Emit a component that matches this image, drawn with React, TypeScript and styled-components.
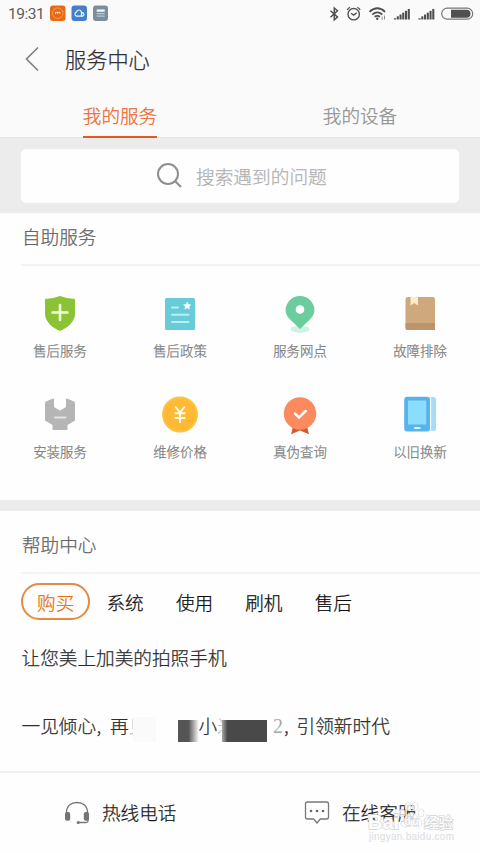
import React from "react";
import styled, { createGlobalStyle } from "styled-components";

const Global = createGlobalStyle`
  * { box-sizing: border-box; }
  body {
    margin: 0;
    background: #fefefe;
    font-family: "Noto Sans CJK SC", "Noto Sans", sans-serif;
    font-weight: 300;
    -webkit-text-stroke-width: 0.25px;
  }
`;

const Screen = styled.main`
  position: relative;
  width: 480px;
  height: 853px;
  overflow: hidden;
  display: flex;
  flex-direction: column;
  background: #fefefe;
`;

const StatusBar = styled.div`
  height: 27px;
  flex: none;
  display: flex;
  align-items: center;
  justify-content: space-between;
  padding: 0 6px 0 8px;
  background: #fafafa;
`;

const StatusLeft = styled.div`
  display: flex;
  align-items: center;
`;

const Clock = styled.span`
  width: 42px;
  padding-top: 1px;
  font-family: Roboto, sans-serif;
  font-weight: 400;
  -webkit-text-stroke-width: 0;
  font-size: 15.5px;
  line-height: 27px;
  letter-spacing: -0.5px;
  color: #5c5c5c;
`;

const StatusIcon = styled.svg`
  display: block;
  flex: none;
`;

const Header = styled.header`
  height: 65px;
  flex: none;
  display: flex;
  align-items: center;
  padding: 0 0 2px 25px;
  background: #fafafa;
`;

const PageTitle = styled.h1`
  margin: 0 0 0 25px;
  font-size: 21.2px;
  line-height: 30px;
  font-weight: 300;
  color: #303030;
`;

const Tabs = styled.nav`
  height: 46px;
  flex: none;
  display: grid;
  grid-template-columns: 1fr 1fr;
  justify-items: center;
  background: #fafafa;
  border-bottom: 1px solid #e6e6e6;
`;

const Tab = styled.div<{ $active?: boolean }>`
  height: 47px;
  padding-top: 8px;
  font-size: 18.6px;
  line-height: 29px;
  color: ${(p) => (p.$active ? "#eb6830" : "#909090")};
  border-bottom: 3px solid ${(p) => (p.$active ? "#e05a22" : "transparent")};
  border-radius: 0 0 1px 1px;
`;

const SearchArea = styled.div`
  height: 75px;
  flex: none;
  padding: 11px 21px 10px;
  background: #ececec;
`;

const SearchBox = styled.div`
  height: 54px;
  border-radius: 5px;
  background: #fefefe;
  display: flex;
  align-items: center;
  padding: 0 0 1px 135px;
  gap: 13px;
  font-size: 18.7px;
  color: #b0b0b0;
`;

const SearchHint = styled.span`
  margin-top: -1px;
`;

const SectionTitle = styled.h2<{ $height: number; $line: number }>`
  margin: 0 0 0 21px;
  height: ${(p) => p.$height}px;
  flex: none;
  line-height: ${(p) => p.$line}px;
  padding-left: 1px;
  font-size: 18.6px;
  font-weight: 300;
  color: #626262;
  border-bottom: 2px solid #f3f3f3;
`;

const ServiceGrid = styled.div`
  height: 234px;
  flex: none;
  display: grid;
  grid-template-columns: repeat(4, 1fr);
  grid-template-rows: 101px 101px;
  padding-top: 25px;
`;

const Service = styled.div`
  display: flex;
  flex-direction: column;
  align-items: center;
`;

const ServiceLabel = styled.span`
  margin-top: 5px;
  font-size: 13.4px;
  line-height: 20px;
  color: #7c7c7c;
`;

const Gap = styled.div`
  height: 11px;
  flex: none;
  background: #ececec;
`;

const Chips = styled.div`
  flex: none;
  display: flex;
  padding: 9px 0 0 21px;
`;

const Chip = styled.div<{ $active?: boolean }>`
  width: 69.4px;
  height: 37px;
  padding-bottom: 1px;
  display: flex;
  align-items: center;
  justify-content: center;
  font-size: 18.6px;
  color: ${(p) => (p.$active ? "#e36f0c" : "#0c0c0c")};
  border: 2px solid ${(p) => (p.$active ? "#e58a42" : "transparent")};
  border-radius: 19px;
`;

const Article = styled.div<{ $height: number }>`
  height: ${(p) => p.$height}px;
  flex: none;
  display: flex;
  align-items: center;
  padding: 0 0 3px 21.5px;
  font-size: 18.65px;
  color: #2c2c2c;
  white-space: pre;

  & + & {
    margin-bottom: 15px;
  }
`;

const Piece = styled.span<{ $w: number }>`
  width: ${(p) => p.$w}px;
  flex: none;
`;

const FadedPiece = styled.span`
  width: 18.6px;
  flex: none;
  color: transparent;
  background: linear-gradient(90deg, #aaa, #ccc 5px, transparent 6px);
  background-clip: text;
  -webkit-background-clip: text;
`;

const Two = styled.span`
  width: 11px;
  flex: none;
  margin-top: 3px;
  font-family: "Liberation Serif", serif;
  -webkit-text-stroke-width: 0;
  font-size: 20px;
  color: #a8a8a8;
`;

const Mask = styled.span<{ $w: number; $h: number; $fill: string; $ml: number }>`
  width: ${(p) => p.$w}px;
  height: ${(p) => p.$h}px;
  margin-left: ${(p) => p.$ml}px;
  margin-bottom: 11px;
  align-self: flex-end;
  flex: none;
  background: ${(p) => p.$fill};
`;

const Footer = styled.footer`
  height: 81px;
  flex: none;
  display: grid;
  grid-template-columns: 1fr 1fr;
  border-top: 2px solid #f0f0f0;
`;

const FooterItem = styled.div`
  display: flex;
  align-items: center;
  gap: 12px;
  padding-left: 64px;
  font-size: 18.6px;
  color: #1c1c1c;
`;

const FooterLabel = styled.span`
  margin-top: -2px;
`;

const Watermark = styled.div`
  position: absolute;
  left: 367px;
  top: 801px;
  width: 90px;
  height: 44px;
  -webkit-text-stroke-width: initial;
`;

const ShieldIcon = () => (
  <svg width="40" height="44" viewBox="0 0 40 44">
    <path d="M20 5 Q28 8 35 8V23C35 31 27 37 20 40C13 37 5 31 5 23V8Q12 8 20 5Z" fill="#8bc334" />
    <path d="M20 14v15M12.500 21.500h15" stroke="#f0ffd9" strokeWidth="2.600" strokeLinecap="round" />
  </svg>
);

const PolicyIcon = () => (
  <svg width="40" height="44" viewBox="0 0 40 44">
    <rect x="5" y="7" width="30" height="32" rx="1.500" fill="#68ccd8" />
    <path d="M12 16.500h6M12 23.700h16.500M12 31h16.500" stroke="#b6f0f3" strokeWidth="2" strokeLinecap="round" />
    <path d="M27.200 11l1.100 2.400 2.600.3-1.900 1.800.5 2.600-2.300-1.300-2.300 1.300.5-2.600-1.900-1.800 2.600-.3z" fill="#fff" stroke="#fff" strokeWidth=".5" />
  </svg>
);

const PinIcon = () => (
  <svg width="40" height="44" viewBox="0 0 40 44">
    <ellipse cx="20" cy="38.200" rx="9.500" ry="3.700" fill="#d5f1e3" />
    <path d="M20 38L9.200 27.500C6.800 24.700 5.600 22.500 5.600 19.500a14.400 14.400 0 0 1 28.800 0C34.400 22.500 33.200 24.700 30.800 27.500Z" fill="#6bcd9d" />
    <circle cx="20" cy="18.500" r="4.300" fill="#fff" />
  </svg>
);

const BookIcon = () => (
  <svg width="40" height="44" viewBox="0 0 40 44">
    <path d="M8 6h25a2 2 0 0 1 2 2v31H7.500a2 2 0 0 1-2-2V8.500a2.500 2.500 0 0 1 2.500-2.500Z" fill="#cfa97d" />
    <path d="M5.500 32H35v7H7.500a2 2 0 0 1-2-2Z" fill="#bd956c" />
    <path d="M10.500 6h7.500v8.500l-3.700-2.600-3.800 2.600Z" fill="#fbecd0" />
  </svg>
);

const WrenchIcon = () => (
  <svg width="40" height="44" viewBox="0 0 40 44">
    <path d="M6 9.500L13 6.500Q14 6.200 14 7.500V15L20 18.500L26 15V7.500Q26 6.200 27 6.500L34 9.500Q35 10 35 11V28.500L27.500 33V38H12.500V33L5 28.500V11Q5 10 6 9.500Z" fill="#b5b5b5" />
    <path d="M15 25.500h10.500" stroke="#e4e4e4" strokeWidth="2" strokeLinecap="round" />
  </svg>
);

const CoinIcon = () => (
  <svg width="40" height="44" viewBox="0 0 40 44">
    <circle cx="20" cy="22.500" r="17" fill="#ffb935" stroke="#fbc53c" strokeWidth="1.800" />
    <path d="M15.200 14.500L20 20.500L24.800 14.500M20 20.500V31M14.500 21.200h11M14.500 26h11" fill="none" stroke="#fffbe9" strokeWidth="2" />
  </svg>
);

const MedalIcon = () => (
  <svg width="40" height="44" viewBox="0 0 40 44">
    <path d="M13 34h14l2 8.300L20 38.500L11.200 42.300Z" fill="#cc5e33" />
    <circle cx="20" cy="21.500" r="16.200" fill="#fb8a5f" />
    <path d="M15 21.700L19 25.500L25.700 19" fill="none" stroke="#fff" strokeWidth="2.500" strokeLinecap="round" />
  </svg>
);

const PhoneIcon = () => (
  <svg width="40" height="44" viewBox="0 0 40 44">
    <path d="M29 5h4.500q2.500 0 2.500 2.500V36.500q0 2.500-2.500 2.500H29Z" fill="#a7dcf6" />
    <rect x="3.600" y="4" width="27.500" height="36" rx="3.800" fill="#fff" />
    <rect x="4.200" y="4.800" width="25.800" height="34.700" rx="3" fill="#56b4ec" />
    <path d="M8 8.500h18.200v24H8z" fill="#8addff" />
    <path d="M15 36h4.500" stroke="#e4f8ff" strokeWidth="2.200" strokeLinecap="round" />
  </svg>
);

const AppBadges = () => (
  <StatusIcon width="60" height="18" viewBox="0 1 60 18">
    <rect x="0" y="1.500" width="15.500" height="15.500" rx="3" fill="#e96816" />
    <circle cx="7.700" cy="9.200" r="5.300" fill="none" stroke="#ff9b54" />
    <path d="M5.500 10V8.300h4.400V10M7.700 8.500V10" fill="none" stroke="#ffe4cd" strokeWidth=".9" />
    <rect x="21.500" y="1.500" width="15.500" height="15.500" rx="3" fill="#447fce" />
    <path d="M26.500 12.200a2.300 2.300 0 0 1 0-4.300c.4-2.400 4.100-2.700 4.900 0l.3 4.300ZM31.500 12.200V8.700h1a1.800 1.800 0 0 1 0 3.500Z" fill="none" stroke="#eef6ff" strokeWidth="1.200" />
    <rect x="43" y="1.500" width="15" height="15.500" rx="3" fill="#7b8e9b" />
    <path d="M46.700 6.600h8" stroke="#f4f7f9" strokeWidth="2.300" />
    <path d="M46.700 9.700h8M46.700 12.200h8" stroke="#bdc8cf" strokeWidth="1.300" />
  </StatusIcon>
);

const bars = [0, 1, 2, 3, 4, 5];

const SystemIcons = () => (
  <StatusIcon width="146" height="20" viewBox="328 3.5 146 20">
    <path d="M330.500 10.200L337.500 16.500L334.300 19.300V7.500L337.500 10.200L330.500 16.700" fill="none" stroke="#505050" strokeWidth="1.500" />
    <g fill="none" stroke="#555" strokeWidth="1.400">
      <circle cx="353.700" cy="13.700" r="5.700" />
      <path d="M351 12.700l2.700 1.900 2.900-2.200M347.300 9.500q.8-2 2.800-2.700M360.100 9.500q-.8-2-2.800-2.700" />
    </g>
    <g fill="none" stroke="#505050" strokeWidth="1.800">
      <path d="M369.500 11.300q7.800-7 15.600 0M372.300 14.100q5-4.400 10 0M374.600 16.300q2.700-2 5.400 0" />
    </g>
    <circle cx="377.300" cy="18.200" r="1.200" fill="#505050" />
    <path d="M382.200 16v3.500M384.500 15v4" stroke="#777" strokeWidth=".8" />
    {[394, 418.5].map((x) => (
      <g key={x} fill="#505050">
        {bars.map((i) => (
          <rect key={i} x={x + i * 2.75} y={17.7 - i * 1.85} width="2.1" height={1.3 + i * 1.85} />
        ))}
      </g>
    ))}
    <rect x="441.700" y="7.700" width="31" height="11" rx="5.500" fill="none" stroke="#777" strokeWidth="1.200" />
    <path d="M451 9.200h15.500a4 4 0 0 1 4 4a4 4 0 0 1-4 4H451Z" fill="#505050" />
  </StatusIcon>
);

const BackIcon = () => (
  <svg width="15" height="26" viewBox="0 0 15 26">
    <path d="M13 1.500L1.500 13L13 24.500" fill="none" stroke="#828282" strokeWidth="1.700" />
  </svg>
);

const SearchIcon = () => (
  <svg width="27" height="27" viewBox="0 0 27 27">
    <circle cx="12" cy="12" r="10" fill="none" stroke="#8f8f8f" strokeWidth="2" />
    <path d="M19 19L25 25" stroke="#8f8f8f" strokeWidth="2.200" />
  </svg>
);

const HeadsetIcon = () => (
  <svg width="26" height="26" viewBox="0 0 26 26">
    <path d="M2.500 14V12.500C2.500 6 7 2.500 13 2.500S23.500 6 23.500 12.500V14M24 17v4q0 1.500-2 1.500H14" fill="none" stroke="#777" strokeWidth="1.300" />
    <rect x="1" y="12" width="5.200" height="8.800" rx="2" fill="#757575" />
    <rect x="19.800" y="12" width="5.200" height="8.800" rx="2" fill="#757575" />
    <circle cx="14.200" cy="22.400" r="1.500" fill="#757575" />
  </svg>
);

const ChatIcon = () => (
  <svg width="26" height="26" viewBox="0 0 26 26">
    <path d="M3.500 2H22.500Q24.500 2 24.500 4V17Q24.500 19 22.500 19H16.300L13 23L9.700 19H3.500Q1.500 19 1.500 17V4Q1.500 2 3.500 2Z" fill="none" stroke="#777" strokeWidth="1.300" />
    <g fill="#666">
      <circle cx="7" cy="11" r="1.300" />
      <circle cx="13" cy="11" r="1.300" />
      <circle cx="19" cy="11" r="1.300" />
    </g>
  </svg>
);

const WatermarkArt = () => (
  <svg width="90" height="44" viewBox="0 0 90 44">
    <g fill="#fff" fillOpacity=".75" stroke="#dadada" strokeWidth=".7">
      <ellipse cx="35" cy="12" rx="3" ry="4" />
      <ellipse cx="41" cy="5.500" rx="3" ry="4" />
      <ellipse cx="48" cy="5.500" rx="3" ry="4" />
      <ellipse cx="54" cy="12" rx="3" ry="4" />
      <path d="M44.500 12q4 0 6 4c4 3 5 5 4 8-3 4-7 1-10 1s-7 3-10-1c-1-3 1-5 4-8q2-4 6-4Z" />
    </g>
    <g fill="#fff" stroke="#d4d4d4" strokeWidth="1.400" paintOrder="stroke" fontFamily="Liberation Sans, sans-serif" fontWeight="700">
      <text x="1" y="28" fontSize="20" textLength="31">Bai</text>
      <text x="37.500" y="24" fontSize="10" textLength="14">du</text>
      <text x="57" y="27" fontSize="14.500" fontFamily="Noto Sans CJK SC, sans-serif" fontWeight="500">经验</text>
    </g>
    <text x="2" y="39" fontSize="10" fontFamily="Liberation Sans, sans-serif" fill="#dcdcdc" textLength="85">jingyan.baidu.com</text>
  </svg>
);

const services = [
  { label: "售后服务", Icon: ShieldIcon },
  { label: "售后政策", Icon: PolicyIcon },
  { label: "服务网点", Icon: PinIcon },
  { label: "故障排除", Icon: BookIcon },
  { label: "安装服务", Icon: WrenchIcon },
  { label: "维修价格", Icon: CoinIcon },
  { label: "真伪查询", Icon: MedalIcon },
  { label: "以旧换新", Icon: PhoneIcon },
];

export default function App() {
  return (
    <Screen>
      <Global />
      <StatusBar>
        <StatusLeft>
          <Clock>19:31</Clock>
          <AppBadges />
        </StatusLeft>
        <SystemIcons />
      </StatusBar>
      <Header>
        <BackIcon />
        <PageTitle>服务中心</PageTitle>
      </Header>
      <Tabs>
        <Tab $active>我的服务</Tab>
        <Tab>我的设备</Tab>
      </Tabs>
      <SearchArea>
        <SearchBox>
          <SearchIcon />
          <SearchHint>搜索遇到的问题</SearchHint>
        </SearchBox>
      </SearchArea>
      <SectionTitle $height={53} $line={46}>自助服务</SectionTitle>
      <ServiceGrid>
        {services.map(({ label, Icon }) => (
          <Service key={label}>
            <Icon />
            <ServiceLabel>{label}</ServiceLabel>
          </Service>
        ))}
      </ServiceGrid>
      <Gap />
      <SectionTitle $height={63} $line={66}>帮助中心</SectionTitle>
      <Chips>
        {["购买", "系统", "使用", "刷机", "售后"].map((name, i) => (
          <Chip key={name} $active={i === 0}>{name}</Chip>
        ))}
      </Chips>
      <Article $height={76}>让您美上加美的拍照手机</Article>
      <Article $height={60}>
        <Piece $w={75}>一见倾心</Piece>
        <Piece $w={13.5}>,</Piece>
        <Piece $w={19}>再</Piece>
        <FadedPiece>见</FadedPiece>
        <Mask $w={23} $h={25} $ml={-14.6} $fill="#fafafa" />
        <Mask $w={21} $h={22} $ml={21.5} $fill="linear-gradient(90deg, #555 50%, #fefefe)" />
        <Piece $w={18.6}>小</Piece>
        <FadedPiece>米</FadedPiece>
        <Mask $w={45} $h={22} $ml={-13.6} $fill="linear-gradient(90deg, #aaa, #494949 12%)" />
        <Piece $w={6}> </Piece>
        <Two>2</Two>
        <Piece $w={12.5}>,</Piece>
        <span>引领新时代</span>
      </Article>
      <Footer>
        <FooterItem>
          <HeadsetIcon />
          <FooterLabel>热线电话</FooterLabel>
        </FooterItem>
        <FooterItem>
          <ChatIcon />
          <FooterLabel>在线客服</FooterLabel>
        </FooterItem>
      </Footer>
      <Watermark>
        <WatermarkArt />
      </Watermark>
    </Screen>
  );
}
